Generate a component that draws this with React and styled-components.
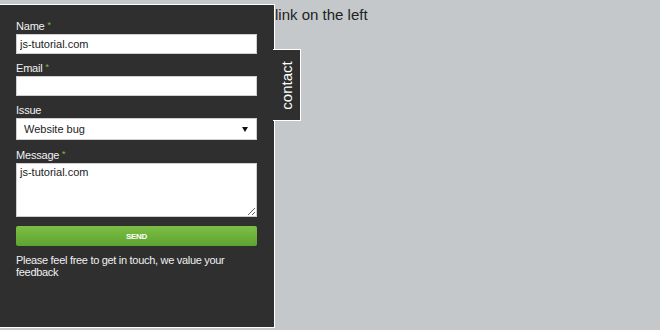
import React from 'react';
import styled, { createGlobalStyle } from 'styled-components';

const GlobalStyle = createGlobalStyle`
  html, body {
    margin: 0;
    padding: 0;
    background: #c4c8cb;
    font-family: Arial, "Liberation Sans", sans-serif;
  }
`;

const Page = styled.div`
  display: flex;
  align-items: flex-start;
  width: 660px;
  height: 330px;
  overflow: hidden;
`;

const Panel = styled.aside`
  position: relative;
  box-sizing: border-box;
  margin-top: 4px;
  width: 275px;
  height: 324px;
  background: #2f2f2f;
  border: 1px solid #ffffff;
  border-left: 0;
  padding: 15px 17px 0 16px;
  color: #f0f0f0;
`;

const Tab = styled.div`
  position: absolute;
  left: 273px;
  top: 44px;
  box-sizing: border-box;
  width: 28px;
  height: 72px;
  background: #2f2f2f;
  border: 1px solid #ffffff;
  border-left: 0;
  display: flex;
  align-items: center;
  justify-content: center;
`;

const TabLabel = styled.span`
  transform: rotate(-90deg);
  color: #ffffff;
  font-size: 15px;
  white-space: nowrap;
`;

const Form = styled.form`
  display: flex;
  flex-direction: column;
  align-items: flex-start;
`;

const Label = styled.label`
  font-size: 11px;
  line-height: 13px;
  letter-spacing: -0.2px;
  margin-bottom: 1px;
  color: #f2f2f2;
`;

const Star = styled.span`
  color: #7cc242;
  font-size: 9px;
  vertical-align: top;
  line-height: 11px;
`;

const Input = styled.input`
  box-sizing: border-box;
  width: 241px;
  height: 20px;
  border: 1px solid #cfcfcf;
  padding: 0 3px;
  font: 11px Arial, "Liberation Sans", sans-serif;
  color: #222;
  margin: 0 0 8px;
  outline: none;
`;

const SelectBox = styled.div`
  position: relative;
  box-sizing: border-box;
  width: 241px;
  height: 22px;
  background: #fff;
  border: 1px solid #cfcfcf;
  font-size: 11px;
  color: #222;
  display: flex;
  align-items: center;
  padding-left: 7px;
  margin-bottom: 9px;
`;

const Caret = styled.span`
  position: absolute;
  right: 8px;
  top: 8px;
  width: 0;
  height: 0;
  border-left: 3px solid transparent;
  border-right: 3px solid transparent;
  border-top: 5px solid #111;
`;

const TextArea = styled.textarea`
  box-sizing: border-box;
  width: 241px;
  height: 54px;
  border: 1px solid #cfcfcf;
  padding: 2px 3px;
  margin: 0 0 9px;
  font: 11px Arial, "Liberation Sans", sans-serif;
  color: #222;
  resize: vertical;
  outline: none;
`;

const Button = styled.button`
  box-sizing: border-box;
  width: 241px;
  height: 20px;
  border: 0;
  border-radius: 2px;
  background: linear-gradient(#7dbf45, #5ea331);
  color: #ffffff;
  font: bold 8px Arial, "Liberation Sans", sans-serif;
  letter-spacing: -0.3px;
`;

const Note = styled.p`
  margin: 8px 0 0;
  font-size: 11px;
  line-height: 12px;
  letter-spacing: -0.3px;
  color: #f0f0f0;
  width: 240px;
`;

const Main = styled.main`
  padding: 6px 0 0 0;
  font-size: 15px;
  color: #222;
`;

const Field = ({ label, required, children }) => (
  <>
    <Label>
      {label} {required && <Star>*</Star>}
    </Label>
    {children}
  </>
);

export default function App() {
  return (
    <>
      <GlobalStyle />
      <Page>
        <Panel>
          <Form onSubmit={(e) => e.preventDefault()}>
            <Field label="Name" required>
              <Input defaultValue="js-tutorial.com" />
            </Field>
            <Field label="Email" required>
              <Input />
            </Field>
            <Field label="Issue">
              <SelectBox>
                Website bug
                <Caret />
              </SelectBox>
            </Field>
            <Field label="Message" required>
              <TextArea defaultValue="js-tutorial.com" />
            </Field>
            <Button type="submit">SEND</Button>
          </Form>
          <Note>Please feel free to get in touch, we value your feedback</Note>
          <Tab>
            <TabLabel>contact</TabLabel>
          </Tab>
        </Panel>
        <Main>link on the left</Main>
      </Page>
    </>
  );
}
